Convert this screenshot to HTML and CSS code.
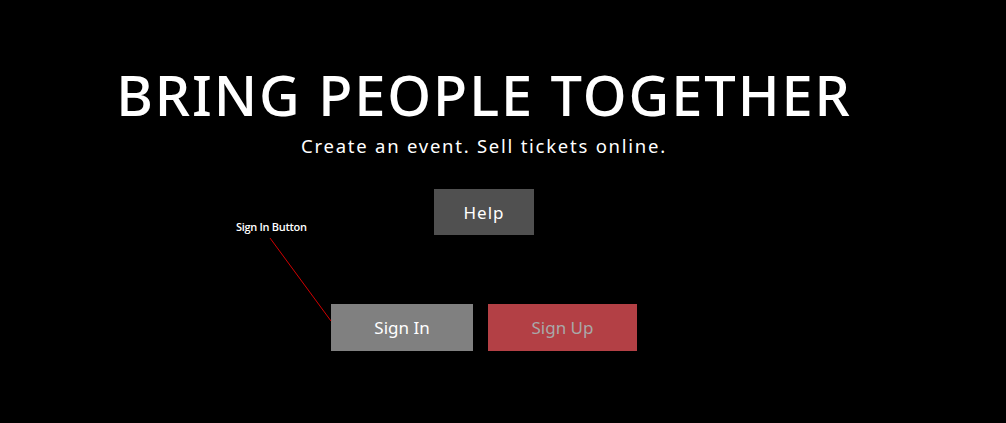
FILE: index.html
```html
<!DOCTYPE html>
<html>
<head>
<meta charset="utf-8">
<link rel="stylesheet" href="styles.css">
</head>
<body>
<main class="hero">
  <h1 class="title">BRING PEOPLE TOGETHER</h1>
  <p class="subtitle">Create an event. Sell tickets online.</p>
  <div class="help-row"><button class="btn btn-help">Help</button></div>
  <div class="auth-row">
    <button class="btn btn-signin">Sign In</button>
    <button class="btn btn-signup">Sign Up</button>
  </div>
</main>
<div class="annotation">
  <span class="annotation-label">Sign In Button</span>
  <svg class="annotation-line" width="1006" height="423" viewBox="0 0 1006 423"><line x1="270" y1="238" x2="331" y2="321" stroke="#d00000" stroke-width="1"/></svg>
</div>
</body>
</html>
```
FILE: styles.css
```css
html, body {
  margin: 0;
  padding: 0;
  background: #000;
  height: 100%;
  overflow: hidden;
}
body {
  font-family: "Noto Sans", "Open Sans", sans-serif;
  color: #fff;
  position: relative;
}
.hero {
  width: 968px;
  display: flex;
  flex-direction: column;
  align-items: center;
  padding-top: 58px;
}
.title {
  margin: 0;
  font-size: 56px;
  font-weight: 500;
  letter-spacing: 1.9px;
  line-height: 72px;
}
.subtitle {
  margin: 0;
  margin-top: 4px;
  font-size: 18.5px;
  letter-spacing: 1.75px;
  line-height: 24px;
}
.help-row {
  margin-top: 31px;
}
.auth-row {
  margin-top: 69px;
  display: flex;
  gap: 15px;
}
.btn {
  border: none;
  font-family: "Noto Sans", "Open Sans", sans-serif;
  font-size: 17px;
  height: 47px;
  padding: 0;
  color: #fff;
}
.btn-help {
  width: 100px;
  height: 46px;
  background: #505050;
  letter-spacing: 1px;
}
.btn-signin {
  width: 142px;
  background: #808080;
}
.btn-signup {
  width: 149px;
  background: #b34045;
  color: #a9a9a9;
}
.annotation-label {
  position: absolute;
  left: 236px;
  top: 219px;
  font-family: "Open Sans", sans-serif;
  font-size: 11px;
  font-weight: 600;
  letter-spacing: -0.3px;
  color: #fff;
}
.annotation-line {
  position: absolute;
  left: 0;
  top: 0;
  pointer-events: none;
}
```
